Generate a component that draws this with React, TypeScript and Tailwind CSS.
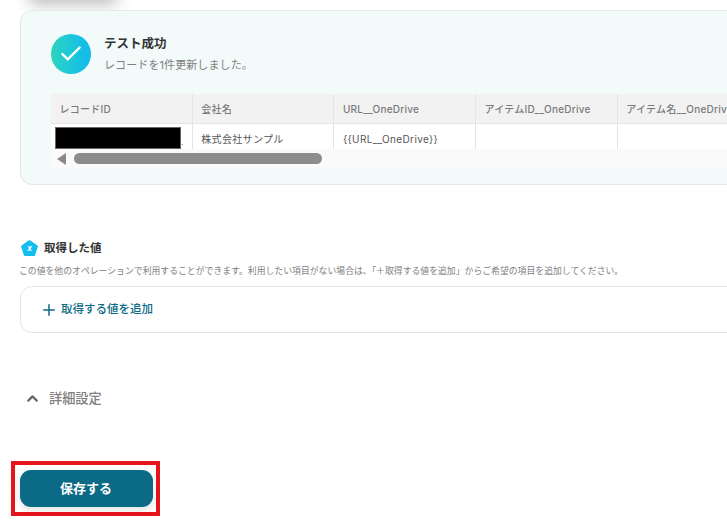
import { Check, ChevronUp, Plus } from 'lucide-react';

const jp = 'font-["Inter","Noto_Sans_CJK_JP","Noto_Sans",sans-serif]';

const columns = ['レコードID', '会社名', 'URL__OneDrive', 'アイテムID__OneDrive', 'アイテム名__OneDrive'];

function ResultTable() {
  return (
    <div className="w-[720px] text-[10px]">
      <div className="flex h-[30px] bg-[#f2f2f2] border-b border-[#e4e4e4] text-[#7a7a7a] font-medium tracking-[0.25px]">
        {columns.map((c) => (
          <div key={c} className="w-[141.7px] shrink-0 border-r border-[#e4e4e4] pl-[8.5px] pt-[1px] flex items-center whitespace-nowrap">
            {c}
          </div>
        ))}
      </div>
      <div className="flex h-[25px] bg-white text-[#555555] tracking-[0.35px]">
        <div className="w-[141.7px] shrink-0 border-r border-[#e4e4e4] pl-[4px] pt-[3px] flex">
          <div className="w-[126px] h-[22px] bg-black border border-[#666666]" />
          <span className="text-[#555555] leading-[30px] text-[8px]">.</span>
        </div>
        <div className="w-[141.7px] shrink-0 border-r border-[#e4e4e4] pl-[8.5px] pt-[8px] whitespace-nowrap">株式会社サンプル</div>
        <div className="w-[141.7px] shrink-0 border-r border-[#e4e4e4] pl-[8.5px] pt-[8px] whitespace-nowrap">{'{{URL__OneDrive}}'}</div>
        <div className="w-[141.7px] shrink-0 border-r border-[#e4e4e4]" />
        <div className="w-[141.7px] shrink-0 border-r border-[#e4e4e4]" />
      </div>
      <div className="flex items-center h-[19px] bg-[#fafafa] pl-[6px] gap-[8px]">
        <svg width="9" height="12" viewBox="0 0 9 12">
          <path d="M9 0 L0 6 L9 12 Z" fill="#8a8a8a" />
        </svg>
        <div className="w-[248px] h-[11px] rounded-full bg-[#8c8c8c]" />
      </div>
    </div>
  );
}

export default function App() {
  return (
    <div className={`w-[727px] h-[527px] overflow-hidden bg-white ${jp}`}>
      <div className="ml-[28px] w-[90px] h-[20px] -mt-[20px] rounded-lg shadow-[0_4px_16px_rgba(0,0,0,0.28)]" />

      <div className="mt-[10px] ml-[20px] w-[800px] h-[175px] rounded-xl border border-[#e4e8e8] bg-[#f2fafa] pt-[23px] pl-[30px]">
        <div className="flex gap-[13px]">
          <div className="w-[40px] h-[40px] rounded-full bg-gradient-to-r from-[#2dd4bf] to-[#12b9ee] flex items-center justify-center">
            <Check className="w-[26px] h-[26px] text-white" strokeWidth={2.2} />
          </div>
          <div className="pt-[1px]">
            <div className="text-[12.5px] font-bold leading-[18px] text-[#333333]">テスト成功</div>
            <div className="text-[11px] tracking-[0.1px] leading-[16px] text-[#808080] mt-[4px]">レコードを1件更新しました。</div>
          </div>
        </div>
        <div className="mt-[20px]">
          <ResultTable />
        </div>
      </div>

      <div className="mt-[55px] ml-[21px] flex items-center gap-[6px]">
        <svg width="17" height="16" viewBox="0 0 17 16">
          <path d="M8.5 0.5 L16.5 6 L13.5 15.5 L3.5 15.5 L0.5 6 Z" fill="#12bdf0" stroke="#12bdf0" strokeLinejoin="round" />
          <text x="8.5" y="11" textAnchor="middle" fontSize="8" fontWeight="700" fontStyle="italic" fill="#ffffff">x</text>
        </svg>
        <span className="text-[11.5px] font-bold leading-[16px] text-[#333333]">取得した値</span>
      </div>
      <p className="mt-[8px] ml-[19px] text-[8.85px] leading-[14px] text-[#808080] whitespace-nowrap">
        この値を他のオペレーションで利用することができます。利用したい項目がない場合は、「＋取得する値を追加」からご希望の項目を追加してください。
      </p>
      <div className="mt-[8px] ml-[20px] w-[800px] h-[47px] rounded-xl border border-[#e4e4e4] flex items-center pl-[19px] gap-[3px]">
        <Plus className="w-[18px] h-[18px] text-[#0b6a85]" strokeWidth={2} />
        <span className="text-[11.5px] font-medium text-[#0b6a85]">取得する値を追加</span>
      </div>

      <div className="mt-[56px] ml-[24px] flex items-center gap-[8px]">
        <ChevronUp className="w-[17px] h-[17px] text-[#666666]" strokeWidth={3} />
        <span className="text-[13.2px] font-medium text-[#808080]">詳細設定</span>
      </div>

      <div className="mt-[52px] ml-[11px] w-[149px] h-[55px] border-[4px] border-[#e8141c] flex items-center justify-center">
        <button className="ml-[1px] w-[133px] h-[37px] rounded-[11px] bg-[#0b6a85] text-white text-[13px] font-bold shadow-[0_3px_8px_rgba(0,0,0,0.12)]">
          保存する
        </button>
      </div>
    </div>
  );
}
